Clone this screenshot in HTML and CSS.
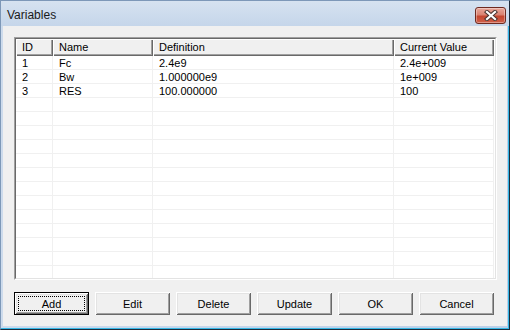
FILE: index.html
```html
<!DOCTYPE html>
<html lang="en">
<head>
    <meta charset="UTF-8">
    <title>Variables</title>
    <link rel="stylesheet" href="styles.css">
</head>
<body>
    <div class="window">
        <!-- Title bar -->
        <div class="titlebar">
            <span class="title">Variables</span>
            <button class="close" aria-label="Close">
                <svg width="14" height="11" viewBox="0 0 14 11">
                    <path d="M3 2 L11 9 M11 2 L3 9" stroke="#4a3430" stroke-width="4.2" stroke-linecap="square" fill="none"/>
                    <path d="M3 2 L11 9 M11 2 L3 9" stroke="#fff" stroke-width="2.2" stroke-linecap="square" fill="none"/>
                </svg>
            </button>
        </div>

        <!-- Client area -->
        <div class="client">
            <div class="listview">
                <div class="lv-inner">
                    <div class="lv-header">
                        <div class="hcell">ID</div>
                        <div class="hcell">Name</div>
                        <div class="hcell">Definition</div>
                        <div class="hcell">Current Value</div>
                    </div>
                    <div class="lv-body">
                        <div class="row"><div class="cell">1</div><div class="cell">Fc</div><div class="cell">2.4e9</div><div class="cell">2.4e+009</div></div>
                        <div class="row"><div class="cell">2</div><div class="cell">Bw</div><div class="cell">1.000000e9</div><div class="cell">1e+009</div></div>
                        <div class="row"><div class="cell">3</div><div class="cell">RES</div><div class="cell">100.000000</div><div class="cell">100</div></div>
                        <div class="row"><div class="cell"></div><div class="cell"></div><div class="cell"></div><div class="cell"></div></div>
                        <div class="row"><div class="cell"></div><div class="cell"></div><div class="cell"></div><div class="cell"></div></div>
                        <div class="row"><div class="cell"></div><div class="cell"></div><div class="cell"></div><div class="cell"></div></div>
                        <div class="row"><div class="cell"></div><div class="cell"></div><div class="cell"></div><div class="cell"></div></div>
                        <div class="row"><div class="cell"></div><div class="cell"></div><div class="cell"></div><div class="cell"></div></div>
                        <div class="row"><div class="cell"></div><div class="cell"></div><div class="cell"></div><div class="cell"></div></div>
                        <div class="row"><div class="cell"></div><div class="cell"></div><div class="cell"></div><div class="cell"></div></div>
                        <div class="row"><div class="cell"></div><div class="cell"></div><div class="cell"></div><div class="cell"></div></div>
                        <div class="row"><div class="cell"></div><div class="cell"></div><div class="cell"></div><div class="cell"></div></div>
                        <div class="row"><div class="cell"></div><div class="cell"></div><div class="cell"></div><div class="cell"></div></div>
                        <div class="row"><div class="cell"></div><div class="cell"></div><div class="cell"></div><div class="cell"></div></div>
                        <div class="row"><div class="cell"></div><div class="cell"></div><div class="cell"></div><div class="cell"></div></div>
                        <div class="row"><div class="cell"></div><div class="cell"></div><div class="cell"></div><div class="cell"></div></div>
                    </div>
                </div>
            </div>

            <div class="buttons">
                <button class="btn default">Add</button>
                <button class="btn">Edit</button>
                <button class="btn">Delete</button>
                <button class="btn">Update</button>
                <button class="btn">OK</button>
                <button class="btn">Cancel</button>
            </div>
        </div>
    </div>
</body>
</html>
```

FILE: styles.css
```css
/* Global */
body {
    margin: 0;
    font-family: 'Liberation Sans', Arial, sans-serif;
    font-size: 11px;
    color: #000;
}

/* Window frame */
.window {
    width: 510px;
    height: 330px;
    box-sizing: border-box;
    display: flex;
    flex-direction: column;
    border: 1px solid #7d98b8;
    border-right-color: #1d2b3a;
    border-bottom-color: #1d2b3a;
    background: linear-gradient(to right, #cddbec, #bcd0e8);
    box-shadow: inset -1px -1px 0 #35b7e6;
}

.titlebar {
    height: 25px;
    display: flex;
    align-items: center;
    justify-content: space-between;
    padding: 0 3px 0 6px;
    background: linear-gradient(#d6e2f0, #c5d6ea);
}

.title {
    font-size: 12px;
    color: #1a1a1a;
    margin-top: 3px;
}

.close {
    width: 31px;
    height: 17px;
    padding: 0;
    margin-top: 3px;
    display: flex;
    align-items: center;
    justify-content: center;
    border: 1px solid #6e2a20;
    border-radius: 3px;
    background: linear-gradient(#e8a89b 0%, #d98271 45%, #c4462f 55%, #d0604a 100%);
    box-shadow: inset 0 0 0 1px rgba(255, 255, 255, 0.35);
}

/* Client area */
.client {
    height: 300px;
    box-sizing: border-box;
    margin: 0 2px 0 2px;
    background: #f0f0f0;
    padding: 11px 0 11px 11px;
    display: flex;
    flex-direction: column;
    gap: 12px;
}

/* List view (sunken 2px edge) */
.listview {
    width: 483px;
    height: 243px;
    box-sizing: border-box;
    border: 1px solid;
    border-color: #a0a0a0 #fff #fff #a0a0a0;
}

.lv-inner {
    height: 100%;
    box-sizing: border-box;
    border: 1px solid;
    border-color: #696969 #e3e3e3 #e3e3e3 #696969;
    background: #fff;
    overflow: hidden;
}

.lv-header,
.row {
    display: grid;
    grid-template-columns: 37px 100px 241px 100px;
}

.hcell {
    height: 17px;
    line-height: 17px;
    padding-left: 6px;
    box-sizing: border-box;
    background: #f0f0f0;
    box-shadow: inset 1px 1px 0 #fff, inset -1px -1px 0 #696969, inset -2px -2px 0 #a0a0a0;
    white-space: nowrap;
}

.row {
    height: 14px;
}

.cell {
    height: 14px;
    line-height: 14px;
    padding-left: 6px;
    box-sizing: border-box;
    border-right: 1px solid #f0f0f0;
    border-bottom: 1px solid #f0f0f0;
    white-space: nowrap;
}

/* Buttons */
.buttons {
    display: flex;
    gap: 6px;
}

.btn {
    width: 75px;
    height: 23px;
    padding: 0;
    font-family: 'Liberation Sans', Arial, sans-serif;
    font-size: 11px;
    color: #000;
    background: #f0f0f0;
    border: none;
    box-shadow: inset 1px 1px 0 #fff, inset -1px -1px 0 #696969, inset 2px 2px 0 #e3e3e3, inset -2px -2px 0 #a0a0a0;
}

.btn.default {
    border: 1px solid #000;
    outline: 1px dotted #000;
    outline-offset: -5px;
}
```
